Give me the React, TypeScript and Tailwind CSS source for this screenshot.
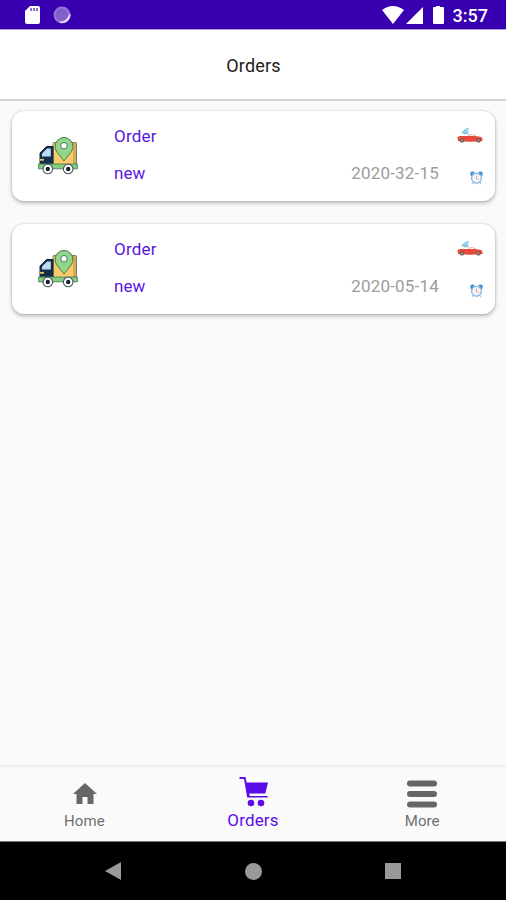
function Truck() {
  return (
    <svg width="40" height="38" viewBox="0 0 40 38" className="block">
      <rect x="15" y="5.5" width="23.5" height="22.5" rx="1" fill="#f9cc68" stroke="#5c6150" strokeWidth=".8" />
      <path d="M35 6v22h3V6z" fill="#d5a957" />
      <path d="M15 9.5H8.5L2 16v12h13z" fill="#122e48" stroke="#142638" strokeWidth="1" />
      <path d="M12.8 11.5v8H4v-3l5-5z" fill="#bddbf3" />
      <path d="M2 22.8h4" stroke="#e5c44f" strokeWidth="1.8" />
      <path d="M.6 27H39.4v4.8H.6z" fill="#82cf82" stroke="#4b7d58" strokeWidth=".9" />
      <path d="M26 24c-2.4-3.8-8.9-9-8.9-14.6a8.9 8.9 0 0 1 17.8 0C34.9 15 28.4 20.2 26 24z" fill="#91d78a" stroke="#4a7552" strokeWidth="1" />
      <circle cx="26" cy="8.8" r="3.3" fill="#fff" stroke="#4d7057" />
      <circle cx="9.8" cy="32" r="4.8" fill="#fff" stroke="#4a5157" strokeWidth="1.1" />
      <circle cx="9.8" cy="32" r="2.2" fill="#172434" />
      <circle cx="30.2" cy="32" r="4.8" fill="#fff" stroke="#4a5157" strokeWidth="1.1" />
      <circle cx="30.2" cy="32" r="2.2" fill="#172434" />
    </svg>
  );
}

function Car() {
  return (
    <svg width="26" height="17" viewBox="0 0 26 17" className="block">
      <path d="M4 6 9.5 .8l3 .5-1.500 2.500 1 3.700-5-.2z" fill="#a7d5ec" />
      <path d="M5 5.500l4-2.700M7 6.800l3.500-1.500" stroke="#6caed2" strokeWidth=".9" />
      <path d="M11 8.300 15.500 7.500l4 2" fill="none" stroke="#e9a09b" strokeWidth=".9" />
      <path d="M.5 10.500Q1 8.800 3.500 9H18l5 .8q2.500.4 2.500 2.400v1.800Q13 15.400 1 14z" fill="#e44b3d" />
      <circle cx="5" cy="13.400" r="2.200" fill="#7b5552" />
      <circle cx="21.500" cy="13.400" r="2.200" fill="#7b5552" />
      <circle cx="5" cy="13.400" r=".8" fill="#c9b8b5" />
      <circle cx="21.500" cy="13.400" r=".8" fill="#c9b8b5" />
    </svg>
  );
}

function Alarm() {
  return (
    <svg width="13" height="14" viewBox="0 0 13 14" className="block">
      <path d="M.4 4.500V1.300Q2.500-.1 4.800 1.200L1.500 5zM12.600 4.500V1.300Q10.500-.1 8.200 1.200L11.500 5z" fill="#3991df" />
      <path d="M3 11.500l-1 1.600M10 11.500l1 1.600" stroke="#a5c9e8" strokeWidth="1.200" />
      <circle cx="6.500" cy="7.300" r="4.900" fill="#f5f5f6" stroke="#85b6e4" strokeWidth="1.300" />
      <path d="M6.500 4.600v3l2 1" fill="none" stroke="#c99b92" strokeWidth=".9" />
    </svg>
  );
}

function OrderCard({ date }: { date: string }) {
  return (
    <article className="flex h-[90px] rounded-[12px] bg-white shadow-[0_2px_4px_rgba(0,0,0,0.28),0_0_2px_rgba(0,0,0,0.16)]">
      <div className="w-[102px] pt-[26px] pl-[26px]"><Truck /></div>
      <div className="flex flex-1 flex-col text-[17px] leading-[20px] text-[#5718de]">
        <span className="mt-[15px] tracking-[0.2px]">Order</span>
        <span className="mt-[17px]">new</span>
      </div>
      <time className="mt-[52px] mr-[18px] text-[17px] leading-[20px] tracking-[0.2px] text-[#9c9c9c]">{date}</time>
      <div className="mr-[12px] flex w-[26px] flex-col items-end">
        <div className="mt-[16px]"><Car /></div>
        <div className="mt-[27px]"><Alarm /></div>
      </div>
    </article>
  );
}

export default function App() {
  return (
    <div className="flex h-[900px] w-[506px] flex-col overflow-hidden bg-[#fafafa] font-['Roboto',sans-serif]">
      <header className="flex h-[30px] shrink-0 items-center border-b border-[#a99bdd] bg-[#3900b1] pl-[25px]">
        <svg width="48" height="20" viewBox="0 0 48 20">
          <path d="M5 1h8q2 0 2 2v14q0 2-2 2H2q-2 0-2-2V6z" fill="#fff" />
          <path d="M6 3v3M9 3v3M12 3v3" stroke="#6544bd" strokeWidth="1.500" />
          <circle cx="37" cy="10" r="8.500" fill="#9371d5" />
          <circle cx="36.500" cy="9.500" r="6" fill="#8260cc" />
          <path d="M45 9c.5 6-5 10-10 8 5 .5 8-3 10-8" fill="#f0e7ff" stroke="#f0e7ff" strokeWidth=".8" />
        </svg>
        <svg className="ml-auto" width="64" height="20" viewBox="0 0 64 20">
          <path d="M0 5Q11-3 22 5L11 19zM41 2v17H24zM54 1h4v1h3q1 0 1 1v15q0 1-1 1H52q-1 0-1-1V3q0-1 1-1h2z" fill="#fff" />
        </svg>
        <span className="mt-[3px] mr-[18px] ml-[7px] text-[18px] leading-[20px] font-medium text-white">3:57</span>
      </header>
      <div className="flex h-[71px] shrink-0 items-center justify-center border-b-2 border-[#d3d3d3] bg-white pt-[2px] pl-px text-[18px] text-[#202020]">
        <h1 className="tracking-[0.2px]">Orders</h1>
      </div>
      <main className="flex flex-1 flex-col gap-[23px] pt-[10px] pr-[11px] pl-[12px]">
        <OrderCard date="2020-32-15" />
        <OrderCard date="2020-05-14" />
      </main>
      <nav className="grid h-[76px] shrink-0 grid-cols-3 border-t-2 border-[#eeeeee] text-center text-[#707070]">
        <div className="flex flex-col items-center">
          <svg className="mt-[16px] ml-px" width="24" height="21" viewBox="0 0 24 21" fill="#666"><path d="M12 0 24 11h-3.500v10H14.500v-7H9.500v7H3.500V11H0z" /></svg>
          <span className="mt-[8px] text-[15px] leading-[18px] tracking-[0.1px]">Home</span>
        </div>
        <div className="flex flex-col items-center text-[#5b0ce8]">
          <svg className="mt-[10px] ml-[3px]" width="30" height="30" viewBox="0 0 30 30" fill="currentColor">
            <path d="M.5 0h6l1.200 5.500H29l-2.700 11H10.200l.5 2.500h18v1.500H8.200L5 2H.5z" />
            <circle cx="12" cy="26" r="3.300" /><circle cx="22" cy="26" r="3.300" />
          </svg>
          <span className="mt-[3px] text-[17px] leading-[20px] tracking-[0.15px]">Orders</span>
        </div>
        <div className="flex flex-col items-center">
          <svg className="mt-[13px]" width="30" height="28" viewBox="0 0 30 28" fill="#666"><rect y=".5" width="30" height="6" rx="3" /><rect y="11" width="30" height="6" rx="3" /><rect y="21.500" width="30" height="6" rx="3" /></svg>
          <span className="mt-[4px] pl-px text-[15px] leading-[18px] tracking-[0.1px]">More</span>
        </div>
      </nav>
      <footer className="flex h-[59px] shrink-0 items-center border-t border-[#777] bg-black pl-[105px] text-[#999]">
        <svg width="16" height="18" viewBox="0 0 16 18" fill="currentColor"><path d="M16 0v18L0 9z" /></svg>
        <div className="ml-[124px] h-[17px] w-[17px] rounded-full bg-[#999]" />
        <div className="ml-[123px] h-[16px] w-[16px] bg-[#999]" />
      </footer>
    </div>
  );
}
